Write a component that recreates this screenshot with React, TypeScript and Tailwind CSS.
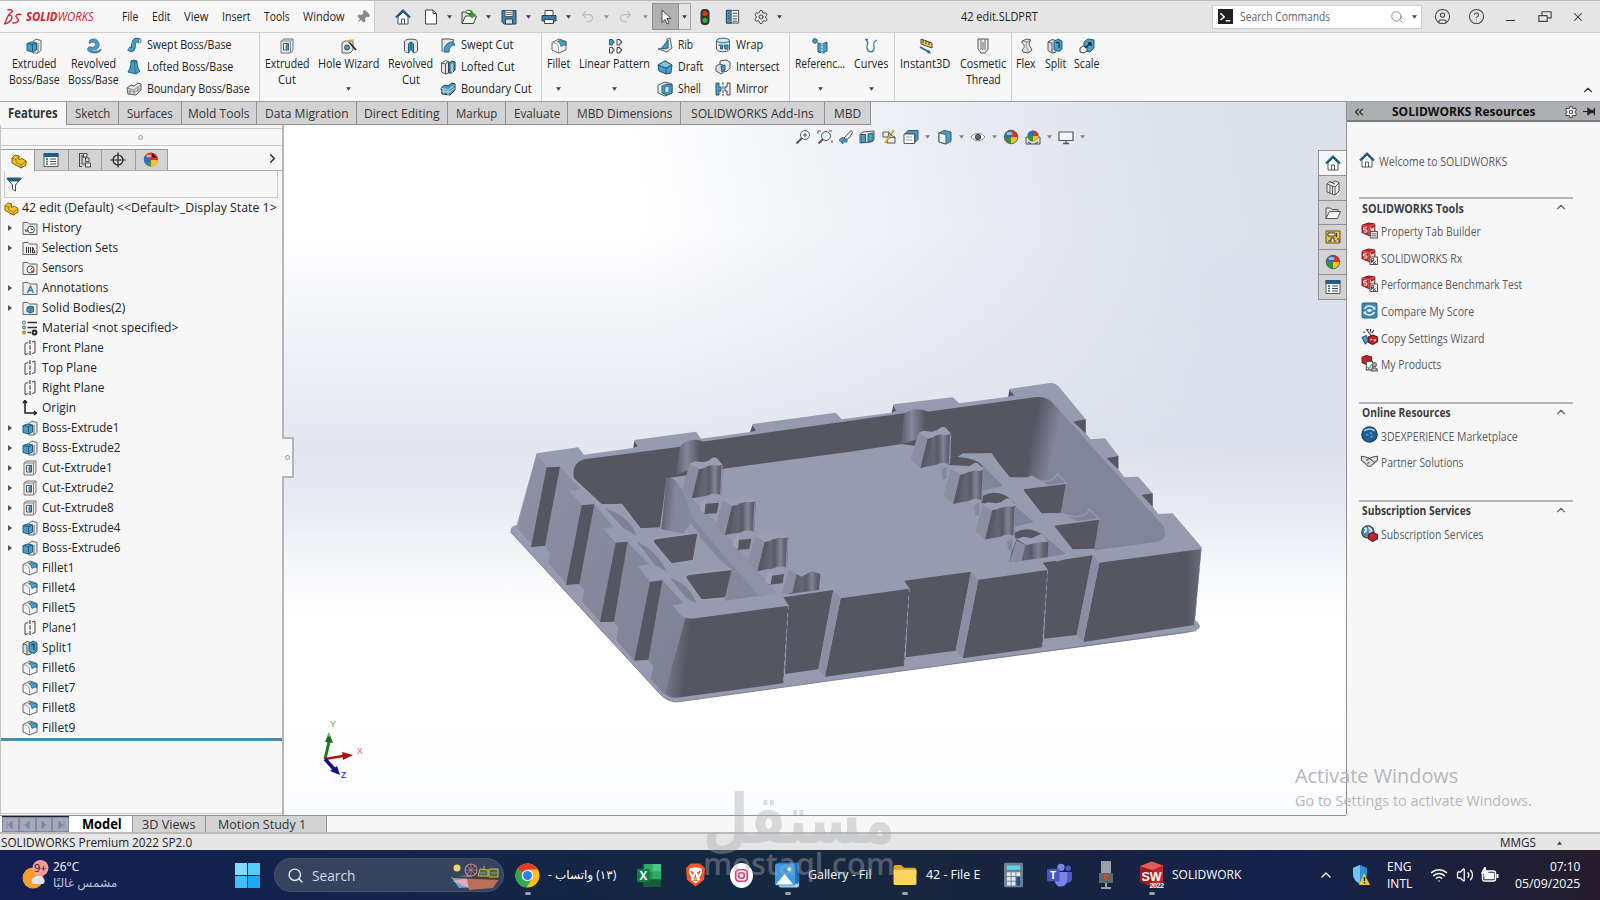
import { useLayoutEffect, useRef, useState } from "react";
import type { ReactNode } from "react";
import { Wifi, Volume2, ChevronUp, ChevronRight, ChevronsLeft, Search, Settings, CircleHelp, CircleUser, Undo2, Redo2, Pin, X } from "lucide-react";

// Text squeezed or stretched to a fixed width
function T({ w, children, className = "" }: { w: number; children: ReactNode; className?: string }) {
  const ref = useRef<HTMLSpanElement>(null);
  const [scale, setScale] = useState(1);
  useLayoutEffect(() => {
    if (ref.current) setScale(w / ref.current.offsetWidth);
  }, [w]);
  return (
    <span className={`block shrink-0 whitespace-nowrap ${className}`} style={{ width: w }}>
      <span ref={ref} className="inline-block origin-left" style={{ transform: `scaleX(${scale})` }}>
        {children}
      </span>
    </span>
  );
}

function Svg({ children, className = "size-4" }: { children: ReactNode; className?: string }) {
  return (
    <svg viewBox="0 0 16 16" className={`shrink-0 ${className}`} fill="none" stroke="#444" strokeWidth="1" strokeLinejoin="round">
      {children}
    </svg>
  );
}

function Caret({ className = "" }: { className?: string }) {
  return (
    <svg viewBox="0 0 6 4" className={`h-1 w-[5px] shrink-0 ${className}`}>
      <path d="M0 0h6L3 4z" fill="#444" />
    </svg>
  );
}

const B = "#4d9cc4";
const D = "#1d5f86";

const folder = <path d="M1 14.500V2.500h5l1.500 1.500h7.500v10.500z" fill="#eee" stroke="#666" />;
const swCube = (
  <>
    <path d="M1 3l6-2 6 1v8l-5 3-7-3z" fill="#c02428" stroke="#8a1519" />
    <path d="M1 3l6 1.500 6-2.500M7.500 5v7.500" stroke="#ee8d8d" strokeWidth=".6" />
    <path d="M5.500 5.500h-3v2h3v2h-3M9 5l.8 4 .9-3 .8 3 .8-4" stroke="#fff" strokeWidth=".9" />
  </>
);

const icons: Record<string, ReactNode> = {
  home: (
    <>
      <path d="M3 8v7h10V8L8 3z" fill="#fff" stroke="#555" />
      <path d="M6.500 15v-5h3v5" stroke="#555" />
      <path d="M1 8.500L8 1.500l7 7" stroke="#1d5f86" strokeWidth="2.200" />
    </>
  ),
  newDoc: <path d="M2.500 1h7.500l3.500 3.500V15h-11zM10 1v3.500h3.500" fill="#fff" />,
  open: (
    <>
      <path d="M1 14V3h4l1 1.500h6V14z" fill="#ddd" />
      <path d="M1 14.500L4.500 7H15.500l-3 7.500z" fill="#f5f5f5" />
      <path d="M5 2c4-1.500 5 0 5 3h-2.500l3.500 4 3.500-4H12c0-4-4-5-7-3z" fill="#3b9e2a" stroke="#27701b" strokeWidth=".5" />
    </>
  ),
  save: (
    <>
      <path d="M1 1.500h14v13.500H3l-2-2z" fill="#3f87ab" stroke="#23485c" />
      <path d="M4 1.500h8v6H4z" fill="#eee" stroke="#555" />
      <path d="M5 3.500h6M5 5.500h6" stroke="#777" />
      <path d="M4.500 10h7v5h-7z" fill="#ddd" stroke="#23485c" />
    </>
  ),
  print: (
    <>
      <path d="M4 6V1.500h8V6" fill="#fff" />
      <path d="M1 6.500h14V12H1z" fill="#3f7fa3" stroke="#23485c" />
      <path d="M3.500 10.500h9v4h-9z" fill="#fff" />
    </>
  ),
  cursor: <path d="M4 1v12.500l3-3 2 4.500 2-1-2-4.500h4z" fill="#fff" stroke="#333" strokeWidth=".9" />,
  light: (
    <>
      <rect x="4" y="0.500" width="8" height="15" rx="3" fill="#2b3b22" stroke="#333" />
      <circle cx="8" cy="4.500" r="2.600" fill="#e03127" stroke="none" />
      <circle cx="8" cy="11.300" r="2.600" fill="#3fa833" stroke="none" />
    </>
  ),
  list: (
    <>
      <path d="M1.500 1.500h13v13.500h-13z" fill="#fff" stroke="#444" />
      <path d="M1.500 1.500h5V15h-5z" fill={B} stroke="#23485c" />
      <path d="M8 4.500h5M8 7.500h5M8 10.500h5M8 13h5M3 4.500h2M3 7.500h2M3 10.500h2" stroke="#333" />
    </>
  ),
  boss: (
    <>
      <path d="M7 3.500L10 1l5 1.500v10L12 15H7z" fill="#eee" stroke="#666" />
      <path d="M12 15V5" stroke="#666" />
      <path d="M1 5.500L5.500 4l5 1v7l-4 2L1 12.500z" fill={B} stroke={D} />
      <path d="M1 5.500l5.500 1 4-1.500M6.500 6.500V14" stroke={D} />
    </>
  ),
  cut: (
    <>
      <path d="M2 3l3-2h9v11l-2.500 3H2z" fill="#e9e9e9" stroke="#777" />
      <path d="M2 3h9.500v12M11.500 3L14 1" stroke="#888" />
      <path d="M4.500 5.500h5v6.500h-5z" fill="#fff" stroke="#555" />
      <path d="M7 7l2.500-1.500V12L7 11z" fill={B} stroke={D} strokeWidth=".8" />
    </>
  ),
  revolve: (
    <>
      <path d="M4 2c5-3 10 1 9 6-1 4-4 4-6 3l-2 2h7l3-2c0 4-7 5-11 3-3-1-3-4-1-5 2-.8 3 .8 5 0 2-1 2-5-1-5-2 0-2 2-4 1z" fill={B} stroke={D} strokeWidth=".7" />
    </>
  ),
  sweep: (
    <>
      <path d="M2.500 11.500c5 3 5-1 5-4S9 2.500 13.500 3.500" stroke={D} strokeWidth="4.800" />
      <path d="M2.500 11.500c5 3 5-1 5-4S9 2.500 13.500 3.500" stroke={B} strokeWidth="3" />
      <ellipse cx="13.800" cy="3.800" rx="1.300" ry="2.200" fill="#bfe0f0" stroke={D} strokeWidth=".7" />
    </>
  ),
  loft: (
    <>
      <path d="M5 2l3-1 3 1c0 5 1 8 3 10l-4 3-8-2c2-3 3-6 3-11z" fill={B} stroke={D} />
      <path d="M8.500 3c0 5 .5 8 1.500 12M5 2l3.500 1L11 2" stroke={D} strokeWidth=".7" />
    </>
  ),
  boundary: (
    <>
      <path d="M1 7l4-3 3 1 4-3 3 1v6l-5 5-8-1z" fill="#e4e4e4" stroke="#555" />
      <path d="M1 7l7 2 7-5M8 9v5M4 8v5M12 6v5M1 10l8 1 6-4" stroke="#777" strokeWidth=".8" />
    </>
  ),
  boundaryCut: (
    <>
      <path d="M1 7l4-3 3 1 4-3 3 1v6l-5 5-8-1z" fill={B} stroke="#234" />
      <path d="M1 7l7 2 7-5M8 9v5M4 8v5M1 10l8 1 6-4" stroke="#cfe6f1" strokeWidth=".8" />
    </>
  ),
  hole: (
    <>
      <path d="M1 5l3-2h8v9l-3 3H1z" fill="#e6e6e6" stroke="#666" />
      <circle cx="6" cy="9.500" r="2.500" fill={B} stroke="#444" />
      <path d="M8 4l7 8" stroke="#222" strokeWidth="1.600" />
      <path d="M9 1l1.500 2M12 1v3M7 4l3 0" stroke="#e5a020" />
    </>
  ),
  revCut: (
    <>
      <path d="M1.500 3c2-2.500 11-2.500 13 0v10c-1 1.500-3 1.500-4 2V6L8 4 5.500 6v9c-1-.5-3-.5-4-2z" fill="#e4e4e4" stroke="#555" />
      <path d="M5.500 6L8 4v7l-2.500 4zM10.500 6L8 4v7l2.500 4z" fill={B} stroke={D} />
    </>
  ),
  sweepCut: (
    <>
      <path d="M2 15V2h8l4 1-2 3" fill="#e4e4e4" stroke="#555" />
      <path d="M4 15c0-6 3-10 9-10l2 3c-4 0-6 2-6 7z" fill={B} stroke={D} />
    </>
  ),
  loftCut: (
    <>
      <path d="M1.500 4l4-2.500 3 1V14l-3 1-4-2z" fill="#e4e4e4" stroke="#555" />
      <path d="M5.500 5v10M1.500 4l4 1 3-2.500" stroke="#555" />
      <path d="M9 4l3-2 3 1v8l-3 3h-3z" fill={B} stroke="#234" />
      <path d="M12 5v9" stroke="#fff" />
    </>
  ),
  fillet: (
    <>
      <path d="M1 4.500L8 1l7 2.500v8.500L7.500 15 1 12z" fill="#f2f2f2" stroke="#666" />
      <path d="M6.500 3.500L9 2.500l6 1.500v3.500c-2-.8-3.500 0-5 1-.5-2.500-1.500-4-3.500-5z" fill={B} stroke={D} strokeWidth=".8" />
      <path d="M1 4.500c3 .5 6 1.500 6.500 4.500v6" stroke="#888" strokeWidth=".8" />
    </>
  ),
  pattern: (
    <>
      <path d="M2.500 1.500h3v1.500H7v2H5.500v2h-3z" fill={B} stroke={D} />
      <path d="M10 1.500h3v1.500h1.500v2H13v2h-3zM2.500 9.500h3V11H7v2H5.500v2h-3zM10 9.500h3V11h1.500v2H13v2h-3z" stroke="#444" />
    </>
  ),
  rib: (
    <>
      <path d="M1 12l9-2V2l3-1 2 10-5 4z" fill="#ddd" stroke="#666" />
      <path d="M4 12L11 3v8z" fill={B} stroke={D} />
    </>
  ),
  draft: (
    <>
      <path d="M1 6l7-4 7 4-1 8-5 1-7-3z" fill={B} stroke={D} />
      <path d="M1 6l8 3 6-3M9 9v6" stroke={D} />
      <path d="M1 6l7-4 7 4-6 3z" fill="#8cc4df" stroke={D} />
    </>
  ),
  shell: (
    <>
      <path d="M1 4l7-3 7 2v9l-7 3-7-3z" fill="#eee" stroke="#555" />
      <path d="M5 5l5-2 5 1v8l-5 2-5-2z" fill={B} stroke={D} />
      <path d="M8 6l4-1v6l-4 1z" fill="#cfe4ef" stroke={D} strokeWidth=".7" />
    </>
  ),
  wrap: (
    <>
      <path d="M1.500 3.500v9c2 3 11 3 13 0v-9" fill="#eee" stroke="#555" />
      <ellipse cx="8" cy="3.500" rx="6.500" ry="2.300" fill="#cfe4ef" stroke={D} />
      <path d="M3.500 8h4v4h-2V9.500M9 8h4v4h-3z" fill={B} stroke={D} />
    </>
  ),
  intersect: (
    <>
      <path d="M1 7l4-2 5 2v5l-4 3-5-3z" fill="#ddd" stroke="#555" />
      <path d="M5 2l6-1 4 2v6l-4 4-3-2V6L5 5z" fill="#eee" stroke="#555" />
      <path d="M6 7l4-1v5l-3 2z" fill={B} stroke={D} />
    </>
  ),
  mirror: (
    <>
      <path d="M1 2v12h3v-4h2V6H4V2z" fill={B} stroke={D} />
      <path d="M8 1v14" stroke="#444" strokeDasharray="3 1" />
      <path d="M15 2v12h-3v-4h-2V6h2V2z" fill="#eee" stroke="#444" />
    </>
  ),
  refGeo: (
    <>
      <circle cx="3" cy="3" r="2.300" fill={B} stroke={D} />
      <path d="M6 5l4 1 5-2v9l-4 2-5-1z" fill={B} stroke={D} />
      <path d="M10 5v10" stroke="#dff" strokeDasharray="2 1" />
    </>
  ),
  curves: <path d="M2 1.500h3M3 2c4 2 0 5 1 8 1 5 6 5 7 1 1-3-3-6 3-9" stroke="#2f7ea8" strokeWidth="1.300" />,
  instant: (
    <>
      <path d="M3 1l11 4v5L3 6z" fill="#f0d050" stroke="#444" />
      <path d="M5 2v3M8 3v3M11 4v3" stroke="#333" />
      <path d="M2 9l9 5" stroke="#2f6f96" strokeWidth="1.800" />
      <path d="M9 15.500h4l-2-4z" fill="#2f6f96" stroke="none" />
    </>
  ),
  thread: (
    <>
      <path d="M3 1h10v10l-3 4H6l-3-4z" fill="#eee" stroke="#555" />
      <path d="M5 5h6M5 7h6M5 9h6M5 11h6M6 1v3M10 1v3" stroke="#666" />
    </>
  ),
  flex: (
    <>
      <path d="M4 3l5-2 4 1c-3 3-2 5 0 8l1 2-4 3-5-1-1-2c3-2 3-5 0-7z" fill="#e6e6e6" stroke="#555" />
      <path d="M9 4c-2 3 0 6 1 8v3M4 3l5 1 4-2" stroke="#777" strokeWidth=".8" />
    </>
  ),
  split: (
    <>
      <path d="M1 4l4-2.500 4 1V14l-4 1-4-2.500z" fill="#ddd" stroke="#555" />
      <path d="M5 5v10M1 4l4 1" stroke="#555" />
      <path d="M7 3.500L11 1l4 2v8l-3 2.500-5-2z" fill={B} stroke={D} />
      <path d="M9 5l3-1v6" stroke="#123" />
    </>
  ),
  scale: (
    <>
      <path d="M5 4l4-3 6 1v8l-4 4-6-1z" fill={B} stroke={D} />
      <path d="M1 10l3-2 4 1v4l-3 2-4-1z" fill="#eee" stroke="#444" />
      <path d="M6 10l6-5M9 5h3v3" stroke="#123" strokeWidth="1.300" />
    </>
  ),
  part: (
    <>
      <path d="M1 5l3-3 4 1v4l3-1.500 4 2.500v4l-5 3L1 10z" fill="#f0c330" stroke="#7a5c00" />
      <path d="M1 5l4 1.500v3l5 2.500M5 6.500l3-3M10 12v3M10 12l5-4" stroke="#7a5c00" strokeWidth=".7" />
    </>
  ),
  propList: (
    <>
      <path d="M1 1.500h14v13H1z" fill="#fff" stroke="#555" />
      <path d="M1 1.500h14v3H1z" fill={D} stroke={D} />
      <path d="M3 7h2M3 9.500h2M3 12h2" stroke={D} strokeWidth="1.700" />
      <path d="M7 7h6M7 9.500h6M7 12h6" stroke="#444" />
    </>
  ),
  config: (
    <>
      <path d="M2.500 1v14M2.500 1.500h3.500M2.500 14.500h2.500M5 3v9h4M5 5h3" />
      <path d="M6.500 1.500h3.500v3.500H6.500zM8.500 6h3.500v3.500H8.500zM8.500 11h5v4h-5z" fill="#eee" />
    </>
  ),
  target: (
    <>
      <circle cx="8" cy="8" r="5" stroke="#222" strokeWidth="1.200" />
      <path d="M8 .5v15M.5 8h15" stroke="#222" strokeWidth="1.200" />
    </>
  ),
  ball: (
    <>
      <circle cx="8" cy="8" r="6.800" fill="#3d8f3c" stroke="none" />
      <path d="M8 8V1.200A6.800 6.800 0 0 1 14.800 8z" fill="#d93227" stroke="none" />
      <path d="M8 8h6.800A6.800 6.800 0 0 1 8 14.800z" fill="#f1c22e" stroke="none" />
      <path d="M8 8H1.200A6.800 6.800 0 0 1 8 1.200z" fill="#2b6fc1" stroke="none" />
      <circle cx="8" cy="8" r="6.800" stroke="#555" strokeWidth=".8" />
      <ellipse cx="6.500" cy="4.500" rx="3" ry="1.600" fill="#fff" fillOpacity=".55" stroke="none" />
    </>
  ),
  // appearance ball of the manager tabs: red and yellow in front
  appearance: (
    <>
      <circle cx="8" cy="7.500" r="7" fill="#d93227" stroke="none" />
      <path d="M8 8L2 3.500A7 7 0 0 0 3 12.500z" fill="#2b6fc1" stroke="none" />
      <path d="M8 8l-5 4.500A7 7 0 0 0 8 14.500z" fill="#3d9b3c" stroke="none" />
      <path d="M8 8h7A7 7 0 0 1 8 14.500z" fill="#f1c22e" stroke="none" />
      <path d="M9 1l5 5-5-1z" fill="#222" stroke="none" />
      <ellipse cx="6" cy="4" rx="2.500" ry="1.500" fill="#fff" fillOpacity=".6" stroke="none" />
    </>
  ),
  scene: (
    <>
      <path d="M1 8h14v7H1z" fill="#ddd" stroke="#555" />
      <circle cx="8" cy="7" r="5.500" fill="#3d8f3c" stroke="none" />
      <path d="M8 7V1.500A5.500 5.500 0 0 1 13.500 7z" fill="#d93227" stroke="none" />
      <path d="M8 7h5.500A5.500 5.500 0 0 1 8 12.500z" fill="#f1c22e" stroke="none" />
      <path d="M8 7H2.500A5.500 5.500 0 0 1 8 1.500z" fill="#2b6fc1" stroke="none" />
      <path d="M3 13l3 2M13 13l-3 2" stroke="#333" />
    </>
  ),
  filter: (
    <>
      <path d="M1 2.500h14L9.500 9v6L6.500 13V9z" fill="#fff" stroke="#444" />
      <path d="M1 2h14l-2 3H3z" fill={D} stroke={D} />
    </>
  ),
  history: (
    <>
      {folder}
      <circle cx="9" cy="9.500" r="3.400" fill="#fff" stroke="#444" />
      <path d="M3 10h3l-1.500 2zM9 7.500v2h2" stroke={D} />
    </>
  ),
  selSets: (
    <>
      {folder}
      <path d="M4.500 7v6M6.500 7v6M8.500 7v6M10.500 7v6l2.500-.5z" stroke="#333" />
    </>
  ),
  sensors: (
    <>
      {folder}
      <circle cx="8.500" cy="9.500" r="3.500" fill="#fff" stroke="#444" />
      <path d="M8.500 9.500l2-2" />
      <path d="M9 11.500h2.500v-2" stroke="#d22" strokeWidth="1.400" />
    </>
  ),
  annotations: (
    <>
      {folder}
      <path d="M5.500 13l3-7 3 7M6.500 10.500h4" stroke="#2f7ea8" strokeWidth="1.400" />
    </>
  ),
  bodies: (
    <>
      {folder}
      <path d="M5 7.500L8 6l3.500 1v4.500l-3 1.500L5 11.500z" fill={B} stroke={D} />
      <path d="M5 7.500l3.500 1 3-1.500M8.500 8.500V13" stroke={D} strokeWidth=".7" />
    </>
  ),
  material: (
    <>
      <circle cx="2" cy="2.500" r="1.500" fill="#eee" stroke="#666" />
      <circle cx="2" cy="7.500" r="1.500" fill="#9cd" stroke="#468" />
      <circle cx="2" cy="12.500" r="1.500" fill="#f0c330" stroke="#960" />
      <path d="M5.500 2.500H15M5.500 7.500H15M5.500 12.500H9" stroke="#333" strokeWidth="1.300" />
      <circle cx="12.500" cy="12.500" r="2" stroke="#222" strokeWidth="1.800" />
    </>
  ),
  plane: (
    <>
      <path d="M6 2.500L3 3.500v11l3-1M10 2l3-1v11.500l-3 1" stroke="#444" />
      <path d="M8 0v16" stroke="#222" strokeDasharray="4 1.500" />
    </>
  ),
  origin: <path d="M3 1v12h11M1 3l2-2.500L5 3M12 11l2.500 2L12 15" stroke="#222" strokeWidth="1.500" />,
  library: (
    <>
      <path d="M2 4l3-2.500 3 1 2-1.500 4 1.500V11l-4 4-8-3z" fill="#eee" stroke="#555" />
      <path d="M2 4l8 3M10 7v8M10 7l4-4M5 5v8M7.500 6v8M5 2l5 2" stroke="#555" />
    </>
  ),
  folderOpen: (
    <>
      <path d="M1 13.500V3h4.500L7 4.500h6v2" fill="#ddd" stroke="#555" />
      <path d="M1 13.500L4.500 6.500H15.500L12.500 13.500z" fill="#f5f5f5" stroke="#555" />
    </>
  ),
  palette: (
    <>
      <path d="M1 2h14v12H1z" fill="#f0c330" stroke="#554" />
      <path d="M3 4h7v3H3zM11.500 4v4M3 12h3V9h3v3h2M12 10h2v3" fill="#fff" stroke="#333" />
    </>
  ),
  swTab: (
    <>
      {swCube}
      <path d="M9 9h6.500v6H9z" fill="#eee" stroke="#555" />
      <path d="M10.500 11h4M10.500 13h4" stroke="#666" />
    </>
  ),
  swRx: (
    <>
      {swCube}
      <path d="M8.500 8.500h7v7h-7z" fill="#fff" stroke="#555" />
      <path d="M10 14v-4h2v2h-2l4 3M14 12l-2.500 3" stroke="#222" strokeWidth=".8" />
    </>
  ),
  compare: (
    <>
      <rect x="1" y="1" width="14" height="14" rx="1.500" fill="#3d87b2" stroke="#2a6488" />
      <path d="M3.500 6.500c1-3 7-4 9-.5M12.500 9.500c-1 3-7 4-9 .5" stroke="#e8f4fa" strokeWidth="1.500" />
      <path d="M13.500 4v3h-3zM2.500 12V9h3z" fill="#e8f4fa" stroke="none" />
      <ellipse cx="8" cy="8" rx="2.300" ry="1.300" fill="#e8f4fa" stroke="none" />
    </>
  ),
  wizard: (
    <>
      <path d="M1 9l4-2 2 5-3 3z" fill={B} stroke={D} />
      <path d="M7 8.500l4-2 4.500 2V13l-4.500 2.500L7 13.500z" fill="#c02428" stroke="#711" />
      <path d="M8.500 11h2M12 10.500l1 2 1-2" stroke="#fff" strokeWidth=".8" />
      <path d="M5 1l5 7M9 1v3M12 2l-2 3M2 4h2M7 1l-1 1" stroke="#333" />
    </>
  ),
  products: (
    <>
      <path d="M1 2l4-1.500L10 2v5l-5 2-4-2z" fill="#c02428" stroke="#711" />
      <path d="M5 6h6v8H5z" fill="#fff" stroke="#555" />
      <path d="M6 11l1.500 2L10 9" stroke="#3a3" />
      <circle cx="12.500" cy="9" r="2" fill="#aaa" stroke="#666" />
      <path d="M9.500 15c0-4 6-4 6 0z" fill="#aaa" stroke="#666" />
    </>
  ),
  globe: (
    <>
      <circle cx="8" cy="8" r="7.300" fill="#1d5f8f" stroke="#123f60" />
      <path d="M3 4.500c3-2 7-2 10 0" stroke="#a8d0e8" strokeWidth="1.500" />
      <path d="M5 7.500l2 1.500M8 6.500h2v1.500M11 9l-2 2" stroke="#6fb8df" />
    </>
  ),
  shake: (
    <>
      <path d="M.5 3l3 .5L8 5l4-1.500 3.500-.5v4l-2 1.500L9 12.500H7L3 9 .5 7z" fill="#ddd" stroke="#555" />
      <path d="M5 7l3-2 5 4M6 10l2-1.500" stroke="#555" />
    </>
  ),
  subs: (
    <>
      <circle cx="6.500" cy="6.500" r="5.800" fill="#4c92b8" stroke="#234" />
      <path d="M3 3c3 0 2 3 0 4M7 2l3 3-2 2" stroke="#e8f4fa" strokeWidth="1.600" />
      <path d="M7 9l4-2 4.500 2v4L11 15.500 7 13z" fill="#c02428" stroke="#711" />
    </>
  ),
  zoomFit: (
    <>
      <circle cx="10" cy="6" r="4.500" fill="#fff" stroke="#555" />
      <path d="M7 9l-5.500 5.500" stroke="#555" strokeWidth="2" />
      <path d="M8 6h4M10 4v4" stroke={D} />
    </>
  ),
  zoomArea: (
    <>
      <path d="M1 2h3M1 2v3M15 2h-3M15 14v-3" stroke="#555" />
      <circle cx="9" cy="7" r="4.500" fill="#e8f4fa" stroke="#555" />
      <path d="M6 10l-4.500 4.500" stroke="#555" strokeWidth="2" />
    </>
  ),
  prevView: (
    <>
      <path d="M6 9L13 1.500l1.500 2L12 8l-4 3z" fill="#eee" stroke="#555" />
      <path d="M1 11l4-3v2h4v3H5v2z" fill={B} stroke={D} strokeWidth=".8" />
    </>
  ),
  section: (
    <>
      <path d="M1 5l3-2 11-1v9l-3 2-11 1z" fill="#eee" stroke="#555" />
      <path d="M2 5.500h4.500v8H2zM9 5l5-1v8l-5 1z" fill={B} stroke={D} />
    </>
  ),
  dynamic: (
    <>
      <path d="M2 3h6l-1 5H2zM7 9l7-1v6H6z" fill="#eee" stroke="#555" />
      <path d="M13 1L4 14" stroke="#e49b28" strokeWidth="2" />
      <path d="M8 4l6 5" stroke={D} />
    </>
  ),
  orient: (
    <>
      <path d="M5 1.500h10v9l-3 3V5H2z" fill={B} stroke={D} />
      <path d="M1 5h10.500v9.500H1z" fill="#fff" stroke="#555" />
      <path d="M3 8h6M3 11h6" stroke="#999" />
    </>
  ),
  display: (
    <>
      <path d="M2 4l5-2.500L14 3v9l-5 3-7-2z" fill={B} stroke={D} />
      <path d="M2 4l7 1.500V15L2 13z" fill="#e4eef4" stroke="#555" />
    </>
  ),
  eye: (
    <>
      <path d="M1 8c4-5 10-5 14 0-4 5-10 5-14 0z" fill="#fff" stroke="#888" />
      <circle cx="8" cy="8" r="2.700" fill="#567" stroke="#444" />
    </>
  ),
  monitor: (
    <>
      <path d="M1 3h14v8.500H1z" fill="#f3f6fa" stroke="#555" strokeWidth="1.200" />
      <path d="M5 14.500h6M8 11.500v3" stroke="#555" strokeWidth="1.300" />
    </>
  ),
};

function Icon({ name, className }: { name: string; className?: string }) {
  return <Svg className={className}>{icons[name]}</Svg>;
}

function TitleBar() {
  const menus: [string, number, string][] = [
    ["File", 16.5, "ml-[28px]"],
    ["Edit", 18.5, "ml-[13.5px]"],
    ["View", 24, "ml-[13.5px]"],
    ["Insert", 28.5, "ml-[13.5px]"],
    ["Tools", 25.500, "ml-[14px]"],
    ["Window", 41.500, "ml-[13.5px]"],
  ];
  return (
    <header className="flex h-[33px] shrink-0 items-center border-t border-[#bcbcbc] border-b border-b-[#cfcfcf] bg-[#e5e5e5] text-[13px]">
      <div className="flex h-full w-[375px] shrink-0 items-center border-r border-[#cdcdcd] bg-[#f7f7f7] pt-px">
        <svg viewBox="0 0 18 16" className="ml-[4px] h-[17px] w-[18px] overflow-visible" fill="none" stroke="#d2232a" strokeWidth="1.300" strokeLinecap="round" strokeLinejoin="round">
          <path d="M4 .5c3.500-.8 6 .3 3 2.800L4.500 5.500" />
          <path d="M5 6c5-1 4 6-4.500 8.500L4 6.500" />
          <path d="M17 5c-4.500-1-6.500 1.500-4 3.500s2 5-4 5" />
        </svg>
        <T w={68} className="ml-[4px] text-[12.500px] text-[#d2232a] italic">
          <b>SOLID</b>WORKS
        </T>
        {menus.map(([label, w, cls]) => (
          <T key={label} w={w} className={cls}>{label}</T>
        ))}
        <Pin className="ml-[11px] size-[14px] rotate-45 fill-[#888] text-[#888]" />
      </div>
      <Icon name="home" className="ml-[20px] size-4" />
      <Icon name="newDoc" className="ml-[12px] size-4" />
      <Caret className="ml-[8px]" />
      <Icon name="open" className="ml-[8px] h-4 w-[18px]" />
      <Caret className="ml-[8px]" />
      <Icon name="save" className="ml-[10px] size-4" />
      <Caret className="ml-[9px]" />
      <Icon name="print" className="ml-[10px] size-4" />
      <Caret className="ml-[9px]" />
      <Undo2 className="ml-[9px] size-[15px] text-[#bdbdbd]" />
      <Caret className="ml-[9px] opacity-50" />
      <Redo2 className="ml-[9px] size-[15px] text-[#bdbdbd]" />
      <Caret className="ml-[10px] opacity-50" />
      <div className="ml-[4px] flex h-[27px] w-[27px] items-center justify-center border border-[#8f8f8f] bg-[#b1b1b1]">
        <Icon name="cursor" />
      </div>
      <div className="flex h-[27px] w-[12px] items-center justify-center border border-l-0 border-[#a5a5a5]">
        <Caret />
      </div>
      <Icon name="light" className="ml-[6px] size-4" />
      <Icon name="list" className="ml-[12px] size-[15px]" />
      <Settings className="ml-[13px] size-4 stroke-[1.5] text-[#444]" />
      <Caret className="ml-[8px]" />
      <T w={76.500} className="ml-[179px] pt-px">42 edit.SLDPRT</T>
      <div className="ml-[174px] flex h-[24px] w-[210px] items-center border border-[#cfcfcf] bg-white">
        <div className="ml-[5px] flex size-[15px] items-center justify-center bg-[#222] text-white">
          <Svg className="size-3"><path d="M2 3l5 5-5 4M9 13h6" stroke="#fff" strokeWidth="2" /></Svg>
        </div>
        <T w={90.500} className="ml-[7px] pt-px text-[12.5px] text-[#666]">Search Commands</T>
        <Search className="ml-[60px] size-[14px] stroke-[1.5] text-[#777]" />
        <Caret className="ml-[8px]" />
      </div>
      <CircleUser className="ml-[12px] size-[17px] stroke-[1.5] text-[#444]" />
      <CircleHelp className="ml-[17px] size-[17px] stroke-[1.5] text-[#444]" />
      <span className="mt-2 ml-[21px] h-[1.5px] w-[9px] bg-[#333]" />
      <Svg className="ml-[23px] size-[14px]"><path d="M1 6.500h9.500v6.500H1zM4.500 6V2H15v7h-4" strokeWidth="1.300" /></Svg>
      <X className="ml-[19px] size-[14px] stroke-[1.8] text-[#333]" />
    </header>
  );
}

type BigProps = { icon: string; lines: [string, number][]; cell: string; caret?: boolean };
function Big({ icon, lines, cell, caret }: BigProps) {
  return (
    <div className={`flex shrink-0 flex-col items-center pt-[5px] ${cell}`}>
      <Icon name={icon} className="mb-[2px] size-4" />
      {lines.map(([t, w]) => (
        <T key={t} w={w} className="h-4 leading-4">{t}</T>
      ))}
      {caret && <Caret className="mt-[15px]" />}
    </div>
  );
}

function Small({ rows, className = "" }: { rows: [string, string, number][]; className?: string }) {
  return (
    <div className={`flex flex-col pt-[1px] ${className}`}>
      {rows.map(([icon, t, w]) => (
        <div key={t} className="flex h-[22px] items-center gap-[5px]">
          <Icon name={icon} className="size-[16px]" />
          <T w={w}>{t}</T>
        </div>
      ))}
    </div>
  );
}

function Ribbon() {
  const sep = "flex shrink-0 border-r border-[#cfcfcf]";
  return (
    <div className="flex h-[69px] shrink-0 border-b border-[#9a9ca2] bg-[#f7f7f7] text-[12.5px] text-[#222]">
      <div className={`w-[260px] pl-[4.5px] ${sep}`}>
        <Big icon="boss" lines={[["Extruded", 44.500], ["Boss/Base", 50.500]]} cell="w-[59px]" />
        <Big icon="revolve" lines={[["Revolved", 45.500], ["Boss/Base ", 50.500]]} cell="w-[60px]" />
        <Small className="ml-[2px]" rows={[["sweep", "Swept Boss/Base", 84.500], ["loft", "Lofted Boss/Base", 86.500], ["boundary", "Boundary Boss/Base", 102.500]]} />
      </div>
      <div className={`w-[282px] ${sep}`}>
        <Big icon="cut" lines={[["Extruded", 44.500], ["Cut", 18]]} cell="w-[54px]" />
        <Big icon="hole" lines={[["Hole Wizard", 61]]} cell="w-[69px]" caret />
        <Big icon="revCut" lines={[["Revolved", 45.500], ["Cut", 18]]} cell="w-[55px]" />
        <Small className="ml-[2px]" rows={[["sweepCut", "Swept Cut", 52.500], ["loftCut", "Lofted Cut", 54], ["boundaryCut", "Boundary Cut", 70.500]]} />
      </div>
      <div className={`w-[248px] ${sep}`}>
        <Big icon="fillet" lines={[["Fillet", 23]]} cell="w-[33px]" caret />
        <Big icon="pattern" lines={[["Linear Pattern", 71]]} cell="w-[79px]" caret />
        <Small className="ml-[3px] w-[58px]" rows={[["rib", "Rib", 15.500], ["draft", "Draft", 25.500], ["shell", "Shell", 23]]} />
        <Small rows={[["wrap", "Wrap", 27], ["intersect", "Intersect", 43.500], ["mirror", "Mirror", 32]]} />
      </div>
      <div className={`w-[105px] ${sep}`}>
        <Big icon="refGeo" lines={[["Referenc...", 50.500]]} cell="w-[60px]" caret />
        <Big icon="curves" lines={[["Curves", 34.500]]} cell="w-[42px]" caret />
      </div>
      <div className={`w-[117px] ${sep}`}>
        <Big icon="instant" lines={[["Instant3D", 50.500]]} cell="w-[61px]" />
        <Big icon="thread" lines={[["Cosmetic", 46.500], ["Thread", 34.500]]} cell="w-[54px]" />
      </div>
      <Big icon="flex" lines={[["Flex", 19.500]]} cell="w-[28px]" />
      <Big icon="split" lines={[["Split", 21]]} cell="w-[30px]" />
      <Big icon="scale" lines={[["Scale", 25.500]]} cell="w-[33px]" />
      <ChevronUp className="mt-[50px] mr-[5px] ml-auto size-[14px] text-[#333]" />
    </div>
  );
}

const tabs: [string, number, string][] = [
  ["Sketch", 35.500, "w-[52px]"],
  ["Surfaces", 46, "w-[62.5px]"],
  ["Mold Tools", 61.500, "w-[75.5px]"],
  ["Data Migration", 84, "w-[100px]"],
  ["Direct Editing", 75.500, "w-[91px]"],
  ["Markup", 41.500, "w-[58px]"],
  ["Evaluate", 46, "w-[62px]"],
  ["MBD Dimensions", 95, "w-[113px]"],
  ["SOLIDWORKS Add-Ins", 123, "w-[144px]"],
  ["MBD", 27.500, "w-[47px]"],
];

function CommandTabs() {
  return (
    <div className="flex h-[23px] shrink-0 self-start text-[13.500px] text-[#333]">
      <div className="flex w-[66px] items-center justify-center bg-[#f7f7f7] font-bold">
        <T w={49.500}>Features</T>
      </div>
      {tabs.map(([t, w, cls]) => (
        <div key={t} className={`flex items-center justify-center border-b border-l border-[#8d8f94] bg-[#d3d3d3] last:border-r ${cls}`}>
          <T w={w}>{t}</T>
        </div>
      ))}
    </div>
  );
}

const tree: [string, string, number, boolean][] = [
  ["history", "History", 39, true],
  ["selSets", "Selection Sets", 76.500, true],
  ["sensors", "Sensors", 41.500, false],
  ["annotations", "Annotations", 66.500, true],
  ["bodies", "Solid Bodies(2)", 83.500, true],
  ["material", "Material <not specified>", 136.500, false],
  ["plane", "Front Plane", 61.500, false],
  ["plane", "Top Plane", 55, false],
  ["plane", "Right Plane", 62.500, false],
  ["origin", "Origin", 34, false],
  ["boss", "Boss-Extrude1", 77, true],
  ["boss", "Boss-Extrude2", 78, true],
  ["cut", "Cut-Extrude1", 71, true],
  ["cut", "Cut-Extrude2", 72, true],
  ["cut", "Cut-Extrude8", 72, true],
  ["boss", "Boss-Extrude4", 78, true],
  ["boss", "Boss-Extrude6", 78, true],
  ["fillet", "Fillet1", 32.500, false],
  ["fillet", "Fillet4", 33.500, false],
  ["fillet", "Fillet5", 33.500, false],
  ["plane", "Plane1", 35.500, false],
  ["split", "Split1", 31, false],
  ["fillet", "Fillet6", 33.500, false],
  ["fillet", "Fillet7", 33.500, false],
  ["fillet", "Fillet8", 33.500, false],
  ["fillet", "Fillet9", 33.500, false],
];

function FeatureTree() {
  const panelTabs = ["propList", "config", "target", "appearance"];
  return (
    <aside className="relative flex w-[284px] shrink-0 flex-col border-r-2 border-l border-r-[#b4b6ba] border-l-[#c4c4c4] bg-[#f7f7f7] text-[13px] text-[#222]">
      <div className="mt-[3px] flex h-[18px] items-center justify-center border-y border-[#c6c6c6] pr-[3px]">
        <span className="size-[5px] rounded-full border border-[#999]" />
      </div>
      <div className="mt-[3px] flex h-[22px] border-b border-[#a8a8a8]">
        <div className="-mb-px flex w-[33px] items-center justify-center border-t border-[#999] bg-[#f7f7f7] pl-[2px]">
          <Icon name="part" />
        </div>
        {panelTabs.map((n) => (
          <div key={n} className="flex w-[33.500px] items-center justify-center border-t border-l border-[#999] bg-[#d3d3d3] last-of-type:border-r">
            <Icon name={n} />
          </div>
        ))}
        <ChevronRight className="mt-[2px] mr-[2px] ml-auto size-[15px] text-[#222]" />
      </div>
      <div className="mr-[4px] ml-[3px] flex h-[27px] items-center border border-t-0 border-[#c9c9c9] pl-[1px]">
        <Icon name="filter" />
      </div>
      <div className="flex h-5 items-center pl-[3px]">
        <Icon name="part" className="size-[15px]" />
        <T w={255} className="ml-[3px]">42 edit (Default) {"<<Default>_Display State 1>"}</T>
      </div>
      {tree.map(([icon, t, w, open]) => (
        <div key={t} className="flex h-5 items-center">
          <svg viewBox="0 0 4 6" className="ml-[7px] h-[6px] w-1">
            {open && <path d="M0 0l4 3-4 3z" fill="#555" />}
          </svg>
          <Icon name={icon} className="ml-[10px] size-4" />
          <T w={w} className="ml-[4px]">{t}</T>
        </div>
      ))}
      <div className="h-[3px] bg-[#4a8ab5]" />
      <div className="mt-auto mb-[1px] h-px bg-[#c6c6c6]" />
      <div className="absolute top-[312px] left-[281px] z-10 flex h-[41px] w-[12px] items-center justify-center border-2 border-l-0 border-[#b4b6ba] bg-[#f7f7f7]">
        <span className="size-[5px] rounded-full border border-[#999]" />
      </div>
    </aside>
  );
}

// One locating pin of the tray, drawn at its top left corner
function LocatingPin({ x, y }: { x: number; y: number }) {
  return (
    <g transform={`translate(${x} ${y})`}>
      <path d="M-1 12L30 26 12 116 4 117-24 92z" fill="#8b8ea3" />
      <path d="M28 26L50 22Q66 22 76 10L98 18 94 108Q80 100 64 104Q50 112 34 112L6 117z" fill="url(#pin)" />
      <path d="M28 26L40 24 20 114 6 117z" fill="#585965" />
      <path d="M94 20L98 18 94 108 90 106z" fill="#8d90a5" />
      <path d="M-1 13L14 6 40 9Q56 6 70-6L80-4 98 16 84 19Q58 14 44 26L28 30z" fill="#9a9db3" />
    </g>
  );
}

function Model() {
  const dark = "#555662";
  const top = "#979bb0";
  return (
    <svg viewBox="0 0 2160 1050" className="absolute top-[245px] left-[216px] h-[350px] w-[720px]">
      <defs>
        <linearGradient id="side" x1="0" y1="0" x2="1" y2="1">
          <stop offset="0" stopColor="#8e90a6" />
          <stop offset="1" stopColor="#7d7f93" />
        </linearGradient>
        <linearGradient id="corner" gradientUnits="userSpaceOnUse" x1="495" y1="860" x2="560" y2="868">
          <stop offset="0" stopColor="#7e8094" />
          <stop offset="1" stopColor={dark} />
        </linearGradient>
        <linearGradient id="end" gradientUnits="userSpaceOnUse" x1="2060" y1="0" x2="2103" y2="0">
          <stop offset="0" stopColor={dark} />
          <stop offset="1" stopColor="#6a6b7a" />
        </linearGradient>
        <linearGradient id="pin">
          <stop offset="0" stopColor="#585965" />
          <stop offset=".34" stopColor="#62636f" />
          <stop offset=".42" stopColor="#666776" />
          <stop offset=".56" stopColor="#5a5b68" />
          <stop offset=".74" stopColor="#828497" />
          <stop offset=".86" stopColor="#656675" />
          <stop offset="1" stopColor={dark} />
        </linearGradient>
        <linearGradient id="bump">
          <stop offset="0" stopColor="#5c5d6a" />
          <stop offset=".4" stopColor="#84869a" />
          <stop offset=".9" stopColor={dark} />
        </linearGradient>
        <linearGradient id="wall" gradientUnits="userSpaceOnUse" x1="1595" y1="200" x2="1665" y2="215">
          <stop offset="0" stopColor={dark} />
          <stop offset="1" stopColor="#828499" />
        </linearGradient>
        <linearGradient id="curve" gradientUnits="userSpaceOnUse" x1="475" y1="400" x2="525" y2="405">
          <stop offset="0" stopColor={dark} />
          <stop offset="1" stopColor="#85879b" />
        </linearGradient>
      </defs>
      {/* outline of the whole tray */}
      <path
        d="M110 250L235 232 252 254 400 234 403 210 588 185 603 206 750 186 758 162 1007 128 1025 148 1175 128 1180 103 1358 82 1378 100 1525 80 1528 57 1650 39Q1668 38 1680 54L1757 148V190L1772 208 1815 205 1855 257V298L1873 322 1915 320 1958 370V410L1975 432 2018 430 2105 532 2085 750Q2108 768 2095 778L2060 789 1050 924 530 996Q500 994 480 972L32 486Q28 470 50 465z"
        fill={top}
      />
      <path d="M2090 782L1050 924 530 996Q500 994 480 972L32 486" fill="none" stroke="#74768a" strokeWidth="2.500" />
      {/* left outer side */}
      <path
        d="M110 252L140 292 180 290 240 358 207 362 245 405 283 403 342 472 310 476 347 518 383 515 447 583 413 588 450 635 487 630 550 700 517 706 548 742 575 746 520 984Q500 980 488 968L52 475z"
        fill="url(#side)"
      />
      <g fill={dark}>
        <path d="M140 292L180 290 135 528 93 532zM245 406L283 403 238 643 198 645zM347 518L383 515 342 755 300 757zM450 636L487 631 445 870 403 872z" />
        <path d="M1720 155L1757 148V190zM1820 265L1855 258V298zM1925 375L1958 370V410zM403 214L413 228 400 234zM758 166L768 182 750 186zM1180 107L1188 122 1175 128zM1528 61L1543 76 1525 80z" />
      </g>
      <path d="M93 532L135 528 150 550 143 585zM198 645L238 643 253 660 246 698zM300 757L342 755 355 772 350 810zM403 872L445 870 460 890 452 928z" fill={top} />
      {/* front panels */}
      <path d="M556 745L575 746 865 707 850 940 530 983Q505 982 495 968z" fill="url(#corner)" />
      <g fill={dark}>
        <path d="M850 682L1000 660 955 898 855 912 865 705zM1022 685L1228 656 1212 888 975 920z" />
        <path d="M1213 632L1413 605 1367 842 1217 862 1228 655zM1435 629L1643 600 1627 832 1388 865z" />
        <path d="M1628 578L1778 556 1730 795 1632 806 1643 598z" />
      </g>
      <path d="M1798 578L2104 537 2083 765 1750 816z" fill="url(#end)" />
      <path d="M1000 660L1022 685 975 920 955 898zM1413 605L1435 629 1388 865 1367 842zM1778 556L1798 578 1750 816 1730 795z" fill="#8b8ea3" />
      <path d="M865 705L850 940M1228 655L1212 888M1643 600L1627 832M2104 537L2083 765" stroke="#a5a8b8" strokeWidth="2" strokeDasharray="12 12" />
      {/* back wall */}
      <path d="M222 325Q212 272 265 266L540 230 600 216 1210 130 1280 125 1610 81 1640 90 1590 322 1530 322 1470 250 1390 250 1360 268 1330 240 1205 222 1050 245 665 297 600 310 500 325 480 472 422 475 365 402 305 402z" fill={dark} />
      <path d="M540 230Q565 200 608 214L590 290 528 315z" fill="url(#bump)" />
      <path d="M1213 132Q1240 108 1285 125L1262 205 1202 222z" fill="url(#bump)" />
      <path d="M1610 81Q1640 80 1655 95L1990 468Q2008 505 1975 515L1785 541 1705 475 1580 325z" fill="url(#wall)" />
      {/* left compartments */}
      <path d="M500 325Q520 315 545 357L640 450 830 670 675 692 695 600 660 570 590 490 570 462 550 490 484 478z" fill="url(#curve)" />
      <path d="M545 357L560 375 625 435 830 668 780 680 700 590 575 440z" fill="#8f92a7" />
      <path d="M422 474L484 478Q515 498 560 488L572 460 600 495 460 508z" fill={top} />
      <path d="M462 516Q458 508 480 506L592 490 578 570 515 580zM560 624Q556 616 575 614L695 600 675 684 605 688z" fill={dark} />
      <path d="M515 580L578 570Q610 600 655 586L664 572 695 600 560 614z" fill={top} />
      <path d="M460 506L595 488M560 612L695 596M610 690L675 684" fill="none" stroke="#9fa2b6" strokeWidth="4" />
      <path d="M205 310L300 405 520 640 600 704M310 410L365 402 420 475 520 590 605 690" fill="none" stroke="#a0a3b8" strokeWidth="3" />
      <path d="M315 415Q390 440 410 497L370 475zM410 515Q470 540 500 605L465 585zM510 625Q565 640 590 700L560 685z" fill="#7f8195" />
      <path d="M615 402L657 398 650 430 611 432zM715 510L754 506 748 537 710 539zM812 618L852 612 848 640 806 644z" fill={dark} />
      <path d="M602 395L618 386 614 430 600 420zM702 503L718 494 714 538 698 528zM800 611L818 602 812 644 796 636z" fill="#a0a3b8" />
      <LocatingPin x={570} y={268} />
      <LocatingPin x={669} y={378} />
      <LocatingPin x={767} y={486} />
      {/* right compartments */}
      <g transform="translate(1050 0)">
        <path d="M330 262Q385 250 425 250L475 322Q530 330 545 316L600 348 520 357 575 430 635 430 700 462 620 468 668 535 735 540 620 575 560 470 400 370 350 290z" fill={top} />
        <path d="M330 262Q300 245 295 285L400 290Q380 265 330 262z" fill={dark} />
        <path d="M398 285L458 348 400 362zM480 395L552 456 496 470zM585 500L648 552 592 562z" fill="#828499" />
        <path d="M522 362Q518 356 535 354L648 340 632 428 575 430zM615 470Q612 463 628 463L748 447 733 536 668 538z" fill={dark} />
        <path d="M540 322Q600 350 622 312L650 340 520 356M635 430Q700 455 718 418L748 447 612 465" fill="none" stroke="#989bb0" strokeWidth="4" />
        <path d="M395 380Q430 358 470 378L495 402 395 400zM495 488Q530 465 575 492L590 510 495 505z" fill={dark} />
        <path d="M275 300L290 288V325L278 330zM372 408L388 396V435L376 438zM470 515L486 503V545L476 540z" fill="#85879b" />
        <LocatingPin x={206} y={176} />
        <LocatingPin x={304} y={284} />
        <LocatingPin x={400} y={391} />
        <path d="M500 508L520 500 545 505 575 491 595 515 593 562 478 577 484 550z" fill="url(#pin)" />
        <path d="M500 508L520 500 545 505 575 491 595 515 570 517 530 525z" fill="#9a9db3" />
        <path d="M500 512L526 525 515 573 478 577z" fill="#8b8ea3" />
      </g>
      <path d="M874 605L905 620 935 604 961 612 957 660 866 672z" fill="url(#pin)" />
      <path d="M868 598L890 612 877 668 845 672z" fill="#8b8ea3" />
    </svg>
  );
}

function Triad() {
  return (
    <svg viewBox="0 0 46 62" className="absolute top-[593px] left-[35px] h-[62px] w-[46px] overflow-visible" fontFamily="Liberation Sans" fontSize="8.500">
      <path d="M6 41L10 24" stroke="#1a7a1a" strokeWidth="3" />
      <path d="M6 24l4-9 4 10z" fill="#176b1b" />
      <path d="M8 18l2-4 2 5z" fill="#5fc763" />
      <path d="M6 41L24 38" stroke="#b01515" strokeWidth="2.500" />
      <path d="M23 34l11 3-10 5z" fill="#a81212" />
      <path d="M6 41L15 51" stroke="#101080" strokeWidth="3.500" />
      <path d="M11 53l7-5 3 9z" fill="#10108a" />
      <text x="11" y="9" fill="#4caa50">Y</text>
      <text x="38" y="36" fill="#e06060">X</text>
      <text x="22" y="60" fill="#4a4ae0" fontWeight="bold">Z</text>
    </svg>
  );
}

const viewTools: [string, boolean, string][] = [
  ["zoomFit", false, "w-[21.500px]"],
  ["zoomArea", false, "w-[21.500px]"],
  ["prevView", false, "w-[21px]"],
  ["section", false, "w-[22px]"],
  ["dynamic", false, "w-[22px]"],
  ["orient", true, "w-[34px]"],
  ["display", true, "w-[33px]"],
  ["eye", true, "w-[33px]"],
  ["ball", false, "w-[22px]"],
  ["scene", true, "w-[33px]"],
  ["monitor", true, "w-[33px]"],
];

const taskTabs = ["home", "library", "folderOpen", "palette", "ball", "propList"];

function Viewport() {
  return (
    <main className="relative flex flex-1 overflow-hidden">
      <div className="absolute top-[4px] left-[511px] flex h-4">
        {viewTools.map(([n, caret, cls], i) => (
          <div key={i} className={`flex items-center ${cls}`}>
            <Icon name={n} />
            {caret && <Caret className="ml-[6px] opacity-60" />}
          </div>
        ))}
      </div>
      <Model />
      <Triad />
      <div className="mt-[25px] ml-auto flex h-[150px] w-[28px] flex-col border-t border-l border-[#8e9095]">
        {taskTabs.map((n, i) => (
          <div key={n} className={i === 0 ? "flex flex-1 items-center justify-center border-b border-[#8e9095] bg-[#f7f7f7]" : "flex flex-1 items-center justify-center border-b border-[#8e9095] bg-[#d3d3d3]"}>
            <Icon name={n} className="size-4" />
          </div>
        ))}
      </div>
    </main>
  );
}

type Entry = [string, string, number];
function Section({ title, w, entries, className }: { title: string; w: number; entries: Entry[]; className: string }) {
  return (
    <section className={`ml-[12px] w-[214px] border-t-2 border-[#b5b5b5] ${className}`}>
      <div className="flex h-[20px] items-center justify-between pr-[5px] pl-[3px] text-[12.500px] font-bold text-[#3c3c3c]">
        <T w={w}>{title}</T>
        <ChevronUp className="-mt-1 size-[14px] text-[#666]" />
      </div>
      {entries.map(([icon, t, tw]) => (
        <div key={t} className="flex h-[26.600px] items-center">
          <Icon name={icon} className="-mt-1 ml-[2px] size-[17px]" />
          <T w={tw} className="ml-[3px]">{t}</T>
        </div>
      ))}
    </section>
  );
}

function Resources() {
  return (
    <aside className="flex w-[254px] shrink-0 flex-col border-l border-[#8e9095] bg-[#f7f7f7] text-[12px] text-[#5a5a5a]">
      <div className="flex h-[20px] shrink-0 items-center border-b-2 border-[#77797c] bg-[#aeafb2] pt-px text-[13px] font-bold text-[#111]">
        <ChevronsLeft className="ml-[5px] size-[14px] text-[#222]" />
        <T w={144} className="ml-[26px]">SOLIDWORKS Resources</T>
        <Settings className="ml-[28px] size-[14px] fill-white stroke-[1.8] text-[#444]" />
        <Svg className="ml-[5px] size-[13px]">
          <path d="M0 8h6M6 3.500v9M14 3.500v9" stroke="#222" strokeWidth="1.500" />
          <path d="M7 4.500l3 2h4v3h-4l-3 2z" fill="#222" stroke="#222" />
        </Svg>
      </div>
      <div className="mt-[28px] flex h-6 items-center">
        <Icon name="home" className="-mt-1 ml-[12px] size-4" />
        <T w={128} className="ml-[4px]">Welcome to SOLIDWORKS</T>
      </div>
      <Section
        title="SOLIDWORKS Tools"
        w={102}
        className="mt-[23px]"
        entries={[
          ["swTab", "Property Tab Builder", 100],
          ["swRx", "SOLIDWORKS Rx", 81.500],
          ["swRx", "Performance Benchmark Test", 141],
          ["compare", "Compare My Score", 93.500],
          ["wizard", "Copy Settings Wizard", 104],
          ["products", "My Products", 60.500],
        ]}
      />
      <Section
        title="Online Resources"
        w={88.500}
        className="mt-[23px]"
        entries={[["globe", "3DEXPERIENCE Marketplace", 136.500], ["shake", "Partner Solutions", 82.500]]}
      />
      <Section title="Subscription Services" w={108.500} className="mt-[23px]" entries={[["subs", "Subscription Services ", 102]]} />
    </aside>
  );
}

function BottomTabs() {
  const nav = ["M11 3L5 8l6 5zM4 3v10", "M11 3L5 8l6 5z", "M5 3l6 5-6 5z", "M5 3l6 5-6 5zM12 3v10"];
  return (
    <div className="flex h-[17px] w-[1346px] shrink-0 border-t border-b-0 border-[#8e9095] bg-[#f7f7f7] text-[13.500px] text-[#333]">
      <div className="ml-[2px] flex w-[67px] shrink-0 border-t border-[#222]">
        {nav.map((d) => (
          <div key={d} className="flex flex-1 items-center justify-center border border-[#85889e] bg-[#a6a9be]">
            <svg viewBox="0 0 16 16" className="size-3" fill="#82859b" stroke="#82859b"><path d={d} /></svg>
          </div>
        ))}
      </div>
      <div className="flex w-[63px] shrink-0 items-center justify-center bg-white pl-[2px] font-bold text-black"><T w={40}>Model</T></div>
      <div className="flex w-[74px] shrink-0 items-center justify-center border-x border-[#8e9095] bg-[#d3d3d3]"><T w={53.500}>3D Views</T></div>
      <div className="flex w-[121px] shrink-0 items-center border-r border-[#8e9095] bg-[#d3d3d3] pl-[11.5px]"><T w={88}>Motion Study 1</T></div>
    </div>
  );
}

function Dot({ className }: { className: string }) {
  return <span className={`absolute top-[42px] h-[3px] w-[6px] rounded-full bg-[#98a2b3] ${className}`} />;
}

function Taskbar() {
  return (
    <footer className="relative flex h-[50px] shrink-0 items-center bg-linear-to-r from-[#141f54] via-[#15283f] to-[#251c2c] text-[13px] text-white">
      <div className="absolute inset-0 bg-linear-to-r from-transparent from-55% via-[#14224c] via-80% to-transparent" />
      <div className="relative flex h-full w-full items-center">
        <svg viewBox="0 0 28 30" className="ml-[22px] h-[30px] w-[28px] shrink-0">
          <circle cx="11" cy="18" r="10.500" fill="#f6a02c" />
          <path d="M11 24a4 4 0 0 1 2-7 5 5 0 0 1 8 1 3.500 3.500 0 0 1 0 6z" fill="#d8e6f7" />
          <circle cx="18.500" cy="8" r="8" fill="#f39b9b" />
          <text x="12" y="12" fontSize="11" fontFamily="Open Sans" fill="#222">9+</text>
        </svg>
        <div className="ml-[3px] flex flex-col">
          <T w={26.500} className="h-[17px] leading-[17px]">26°C</T>
          <T w={64} className="h-[18px] text-[12px] leading-[16px] text-[#b9c0d4]">
            <span dir="rtl">مشمس غالبًا</span>
          </T>
        </div>
        <div className="ml-[118px] grid size-[25px] shrink-0 grid-cols-2 gap-px">
          <span className="bg-[#7fdcfb]" />
          <span className="bg-[#55cdf9]" />
          <span className="bg-[#3fc0f8]" />
          <span className="bg-[#1ba8f4]" />
        </div>
        <div className="ml-[14px] flex h-[34px] w-[230px] shrink-0 items-center overflow-hidden rounded-full border border-[#45506b] bg-[#36435f]">
          <Search className="ml-[12px] size-[17px] text-[#e6e9ef]" />
          <T w={43} className="ml-[8px] text-[14px] text-[#d7dbe5]">Search</T>
          <svg viewBox="0 0 52 32" className="mr-[2px] ml-auto h-[32px] w-[52px]">
            <circle cx="8" cy="9" r="3.500" fill="#f6d36b" />
            <path d="M2 18l20-2 6 12-18 1z" fill="#6ba8d8" />
            <path d="M4 22l14-3 2 10z" fill="#e8a7c0" />
            <path d="M18 19l32 1-6 9-24 2z" fill="#b96f5b" />
            <path d="M2 17l48 2v2L4 19z" fill="#4b3a2e" />
            <circle cx="22" cy="11" r="6" fill="none" stroke="#b87f86" strokeWidth="1.200" />
            <path d="M22 5v12M16 11h12M18 7l8 8M26 7l-8 8" stroke="#b87f86" strokeWidth=".8" />
            <path d="M29 17l2-7 8 1v6zM40 10h9v8h-9zM35 7v4" fill="#5d6536" stroke="#c9bd3f" />
            <path d="M31 14h6M42 14h6" stroke="#58a4c8" />
          </svg>
        </div>
        <svg viewBox="0 0 26 26" className="ml-[11px] size-[25px] shrink-0">
          <circle cx="13" cy="13" r="12.500" fill="#fbc116" />
          <path d="M13 13L2.200 6.700A12.500 12.500 0 0 1 23.800 6.700H13z" fill="#e33b2e" />
          <path d="M13 13L2.200 6.700A12.500 12.500 0 0 0 12 25.500L18 16z" fill="#2da94f" />
          <circle cx="13" cy="13" r="6" fill="#fff" />
          <circle cx="13" cy="13" r="4.700" fill="#2f7de9" />
        </svg>
        <T w={68} className="ml-[8px] text-[12px]"><span dir="rtl">(١٣) واتساب -</span></T>
        <svg viewBox="0 0 26 26" className="ml-[21px] size-[25px] shrink-0">
          <path d="M7 1h18v24H7z" fill="#1f8f50" />
          <path d="M7 1h9v8H7zM16 9h9v8h-9z" fill="#2cab67" />
          <path d="M16 1h9v8h-9z" fill="#44c987" />
          <path d="M7 17h18v8H7z" fill="#175c36" />
          <rect x="0" y="6" width="13" height="14" rx="1" fill="#107c41" />
          <text x="2.500" y="17.500" fontSize="12" fontWeight="bold" fontFamily="Open Sans" fill="#fff">X</text>
        </svg>
        <svg viewBox="0 0 22 26" className="ml-[23px] h-[26px] w-[21px] shrink-0">
          <path d="M6 1h10l5 5-1 12-9 7-9-7L1 6z" fill="#f1562b" />
          <path d="M5 6l6-1 6 1 1 4-3 6 1 2-5 4-5-4 1-2-3-6z" fill="#fff" />
          <path d="M6 9l3 1.500-1 2zM16 9l-3 1.500 1 2zM11 12v4l-2 1M11 16l2 1M8 19l3-1 3 1" fill="#f1562b" stroke="#f1562b" />
        </svg>
        <svg viewBox="0 0 24 26" className="ml-[24px] h-[27px] w-[23px] shrink-0">
          <ellipse cx="12" cy="13" rx="12" ry="13" fill="#fff" />
          <g fill="none" stroke="#d8417b" strokeWidth="1.800">
            <rect x="6" y="7" width="12" height="12" rx="3.500" />
            <circle cx="12" cy="13" r="3" />
          </g>
        </svg>
        <svg viewBox="0 0 26 28" className="ml-[22px] h-[28px] w-[25px] shrink-0">
          <rect x="4" y="4" width="21" height="23" rx="2" fill="#9fd0ef" />
          <rect x="3" y="1" width="22" height="22" rx="2" fill="#1f6fbd" />
          <rect x="0" y="2" width="21" height="23" rx="2" fill="#3b9be6" />
          <path d="M1 24l9-11 9 11z" fill="#fff" />
          <circle cx="15" cy="8" r="2" fill="#fff" />
        </svg>
        <T w={63.500} className="ml-[8px] text-[12.500px]">Gallery - Fil</T>
        <svg viewBox="0 0 24 22" className="ml-[21px] h-[21px] w-[24px] shrink-0">
          <path d="M0 2q0-2 2-2h6l3 3h11q2 0 2 2v5H0z" fill="#e0a22a" />
          <rect x="0" y="5" width="24" height="16" rx="1.500" fill="#fbd55f" />
        </svg>
        <T w={54.500} className="ml-[9px] pt-px text-[12.500px]">42 - File E</T>
        <svg viewBox="0 0 20 26" className="ml-[24px] h-[26px] w-[19px] shrink-0">
          <rect width="20" height="26" rx="1.500" fill="#6e7f8d" />
          <rect x="3" y="3" width="14" height="4.500" fill="#5ed3f0" />
          <path d="M3 10h4v4H3zM8 10h4v4H8zM13 10h4v4h-4zM3 15h4v4H3zM8 15h4v4H8zM3 20h4v4H3zM8 20h4v4H8z" fill="#e4e9ee" />
          <path d="M13 15h4v9h-4z" fill="#1c4f8f" />
        </svg>
        <svg viewBox="0 0 26 24" className="ml-[24px] h-[24px] w-[25px] shrink-0">
          <circle cx="14.500" cy="4" r="3.800" fill="#7b83eb" />
          <circle cx="22" cy="5" r="2.800" fill="#5059c9" />
          <path d="M17 9h9v7q-1 5-6 4z" fill="#5059c9" />
          <path d="M8 9h13v9q-1 6-7 6-5 0-6-6z" fill="#7b83eb" />
          <rect x="0" y="5.500" width="13" height="13" rx="1" fill="#4b53bc" />
          <text x="3" y="16" fontSize="11" fontWeight="bold" fontFamily="Open Sans" fill="#fff">T</text>
        </svg>
        <svg viewBox="0 0 16 28" className="ml-[26px] h-[28px] w-[16px] shrink-0">
          <path d="M3 0h10v12H3z" fill="#9aa0a6" />
          <path d="M1 12h14v10H1z" fill="#62676d" />
          <path d="M7 22h2v4h4v2H3v-2h4z" fill="#9aa0a6" />
          <circle cx="8" cy="15.500" r="2.600" fill="#c4532e" />
        </svg>
        <svg viewBox="0 0 26 28" className="ml-[25px] h-[28px] w-[25px] shrink-0">
          <path d="M1 5L13 0l12 4v17l-11 6L1 21z" fill="#a3191e" />
          <path d="M1 5L13 0l12 4-11 5z" fill="#e55a5a" />
          <path d="M14 9l11-5v17l-11 6z" fill="#c4262b" />
          <text x="2.500" y="20" fontSize="13" fontWeight="bold" fontFamily="Liberation Sans" fill="#fff" textLength="21" lengthAdjust="spacingAndGlyphs">SW</text>
          <text x="11" y="27.500" fontSize="7.500" fontWeight="bold" fontFamily="Liberation Sans" fill="#fff" textLength="15">2022</text>
        </svg>
        <T w={69} className="ml-[8px] pt-px text-[12.500px]">SOLIDWORK</T>
        <ChevronUp className="ml-[77px] size-4 shrink-0" />
        <svg viewBox="0 0 18 20" className="ml-[18px] h-5 w-[18px] shrink-0">
          <path d="M8 0l7 3v6q0 6-7 10Q1 15 1 9V3z" fill="#2f8fd6" />
          <path d="M8 0v19Q1 15 1 9V3z" fill="#6fc3f2" />
          <path d="M12 8l6 12H7z" fill="#f8c630" />
          <path d="M12.500 12v4M12.500 17v1.500" stroke="#222" strokeWidth="1.500" />
        </svg>
        <div className="ml-[17px] flex flex-col text-[12.500px]">
          <T w={24} className="h-[17px] leading-[17px]">ENG</T>
          <T w={25} className="h-[17px] leading-[17px]">INTL</T>
        </div>
        <Wifi className="ml-[18px] size-[18px] shrink-0" />
        <Volume2 className="ml-[8px] size-[18px] shrink-0 stroke-[1.7]" />
        <svg viewBox="0 0 18 16" className="ml-[7px] h-4 w-[18px] shrink-0" fill="none" stroke="#fff" strokeWidth="1.400">
          <rect x="1.500" y="4" width="13" height="10" rx="2" />
          <path d="M16.500 7v4" strokeWidth="2" />
          <path d="M7 6.500h5.500v5H4z" fill="#fff" />
          <path d="M4 0L1 6h3l-1 4 4-5H4.500z" fill="#fff" />
        </svg>
        <div className="mr-[20px] ml-auto flex flex-col items-end text-[12.500px]">
          <T w={30.500} className="h-[17px] leading-[17px]">07:10</T>
          <T w={65} className="h-[17px] leading-[17px]">05/09/2025</T>
        </div>
        <Dot className="left-[525px]" />
        <Dot className="left-[785px]" />
        <Dot className="left-[902px]" />
        <Dot className="left-[1149px]" />
      </div>
    </footer>
  );
}

export default function App() {
  return (
    <div className="relative flex h-[900px] w-[1600px] flex-col overflow-hidden bg-[#f7f7f7] font-['Open_Sans','DejaVu_Sans',sans-serif] text-[#222]">
      <TitleBar />
      <Ribbon />
      <div className="flex h-[713px] shrink-0">
        <div className="flex w-[1346px] flex-col bg-[linear-gradient(to_bottom,transparent_48%,rgba(255,255,255,.5)_61%,white_73%,white_82%,transparent_100%),linear-gradient(to_bottom,transparent_18%,rgba(219,223,235,.9)_54%,rgba(219,223,235,.9)_60%,#fbfcfe_85%),linear-gradient(80deg,white_50%,#eceff5_70%,#dde1ec_88%,#dce0eb_100%)]">
          <CommandTabs />
          <div className="flex min-h-0 flex-1">
            <FeatureTree />
            <Viewport />
          </div>
        </div>
        <Resources />
      </div>
      <BottomTabs />
      <div className="flex h-[18px] shrink-0 items-center border-t-2 border-[#bbb] bg-[#e5e5e5] pt-px text-[13px] text-[#222]">
        <T w={191} className="ml-[1px]">SOLIDWORKS Premium 2022 SP2.0</T>
        <T w={36} className="ml-auto">MMGS</T>
        <Caret className="mr-[38px] ml-[21px] rotate-180" />
      </div>
      <Taskbar />
      <div className="pointer-events-none absolute top-[761px] left-[1295px] text-[#b6b7ba]">
        <T w={163} className="h-[28px] text-[20.500px] leading-[28px]">Activate Windows</T>
        <T w={237} className="h-[22px] text-[15px] leading-[22px]">Go to Settings to activate Windows.</T>
      </div>
      <div className="pointer-events-none absolute top-[776px] left-[703px] text-[#a9abb0] opacity-40">
        <T w={192} className="h-[70px] font-['DejaVu_Sans'] text-[68px] leading-[88px] font-bold">مستقل</T>
        <T w={192} className="h-[36px] text-[30px] leading-[36px] font-semibold">mostaql.com</T>
      </div>
    </div>
  );
}
